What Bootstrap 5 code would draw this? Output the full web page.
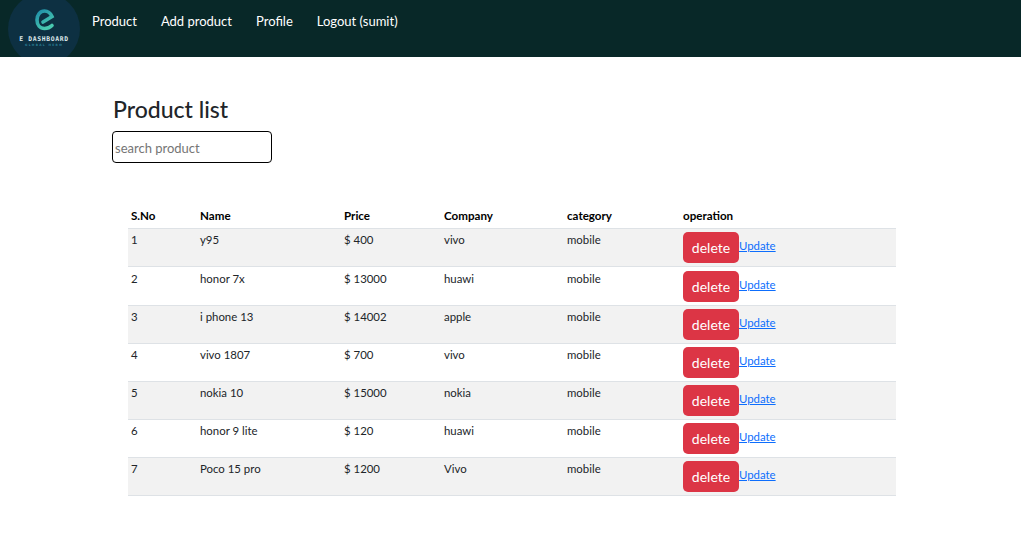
<!DOCTYPE html>
<html lang="en">
<head>
<meta charset="utf-8">
<title>Product list</title>
<link rel="stylesheet" href="https://cdn.jsdelivr.net/npm/bootstrap@5.3.0/dist/css/bootstrap.min.css">
<style>
body { font-family: "Lato", "Noto Sans", sans-serif; background: #fff; }
.top-bar { background: #082828; height: 57px; overflow: hidden; align-items: flex-start; padding: 0 0 0 8px; }
.logo-disc { display: block; width: 72px; height: 72px; margin-top: -7px; }
.logo-title { font-family: "DejaVu Sans Mono", monospace; font-size: 6.4px; font-weight: 700; letter-spacing: .65px; fill: #dfe9ec; }
.logo-sub { font-family: "DejaVu Sans", sans-serif; font-size: 3px; font-weight: 700; letter-spacing: 1.3px; fill: #2a7f96; }
.top-links { gap: 24px; margin-left: 12px; padding-top: 12px; }
.top-links a { color: #fff; font-size: 13px; line-height: 19px; text-decoration: none; }
.page-wrap { padding: 38px 0 0 112px; }
.page-title { font-size: 23px; font-weight: 500; line-height: 28px; margin: 0 0 8px 1px; color: #212529; }
.search-box { display: block; width: 160px; height: 32px; border: 1px solid #000; border-radius: 4px; padding: 1px 2px 0; font-size: 13px; color: #212529; outline: 0; }
.search-box::placeholder { color: #757575; }
.product-table { width: 768px; margin: 41px 0 0 16px; table-layout: fixed; font-size: 11.4px; color: #212529; }
.product-table th, .product-table td { padding: 3px; line-height: 16px; }
.product-table th { color: #000; font-weight: 700; padding: 4px 3px 4px; font-size: 11.6px; }
.product-table td { height: 38px; }
.product-table tbody tr:nth-child(2) td { height: 39px; padding-top: 4px; }
.product-table a { font-size: 11.4px; }
.del-btn { width: 56px; height: 31px; padding: 0; font-size: 14px; line-height: 31px; border: 0; background: #dc3545; border-radius: 5px; color: #fff; }
</style>
</head>
<body>
<nav class="navbar top-bar d-flex flex-nowrap justify-content-start">
  <svg class="logo-disc" viewBox="0 0 72 72" role="img" aria-label="E Dashboard logo">
    <defs><linearGradient id="eg" x1="0" y1="0" x2="0.6" y2="1"><stop offset="0" stop-color="#1f8ea8"/><stop offset="1" stop-color="#49c9b0"/></linearGradient></defs>
    <circle cx="36" cy="36" r="36" fill="#0d3042"/>
    <path d="M35 29 L44 23.500 C42 19 39 18 36.500 18 C32 18 29 22 29 27 C29 32 32 35.500 36.500 35.500 C39.500 35.500 42 34.500 44 32.500" fill="none" stroke="url(#eg)" stroke-width="3.600" stroke-linecap="round"/>
    <text class="logo-title" x="36" y="48" text-anchor="middle">E DASHBOARD</text>
    <text class="logo-sub" x="36" y="52.500" text-anchor="middle">GLOBAL HERO</text>
  </svg>
  <div class="d-flex top-links">
    <a href="#">Product</a>
    <a href="#">Add product</a>
    <a href="#">Profile</a>
    <a href="#">Logout (sumit)</a>
  </div>
</nav>
<main class="page-wrap">
  <h1 class="page-title">Product list</h1>
  <input class="search-box" type="text" placeholder="search product">
  <table class="table table-striped product-table mb-0">
    <colgroup><col style="width:69px"><col style="width:144px"><col style="width:100px"><col style="width:123px"><col style="width:116px"><col></colgroup>
    <thead><tr><th>S.No</th><th>Name</th><th>Price</th><th>Company</th><th>category</th><th>operation</th></tr></thead>
    <tbody>
      <tr><td>1</td><td>y95</td><td>$ 400</td><td>vivo</td><td>mobile</td><td><button class="btn del-btn">delete</button><a href="#">Update</a></td></tr>
      <tr><td>2</td><td>honor 7x</td><td>$ 13000</td><td>huawi</td><td>mobile</td><td><button class="btn del-btn">delete</button><a href="#">Update</a></td></tr>
      <tr><td>3</td><td>i phone 13</td><td>$ 14002</td><td>apple</td><td>mobile</td><td><button class="btn del-btn">delete</button><a href="#">Update</a></td></tr>
      <tr><td>4</td><td>vivo 1807</td><td>$ 700</td><td>vivo</td><td>mobile</td><td><button class="btn del-btn">delete</button><a href="#">Update</a></td></tr>
      <tr><td>5</td><td>nokia 10</td><td>$ 15000</td><td>nokia</td><td>mobile</td><td><button class="btn del-btn">delete</button><a href="#">Update</a></td></tr>
      <tr><td>6</td><td>honor 9 lite</td><td>$ 120</td><td>huawi</td><td>mobile</td><td><button class="btn del-btn">delete</button><a href="#">Update</a></td></tr>
      <tr><td>7</td><td>Poco 15 pro</td><td>$ 1200</td><td>Vivo</td><td>mobile</td><td><button class="btn del-btn">delete</button><a href="#">Update</a></td></tr>
    </tbody>
  </table>
</main>
<script src="https://cdn.jsdelivr.net/npm/bootstrap@5.3.0/dist/js/bootstrap.bundle.min.js"></script>
</body>
</html>
